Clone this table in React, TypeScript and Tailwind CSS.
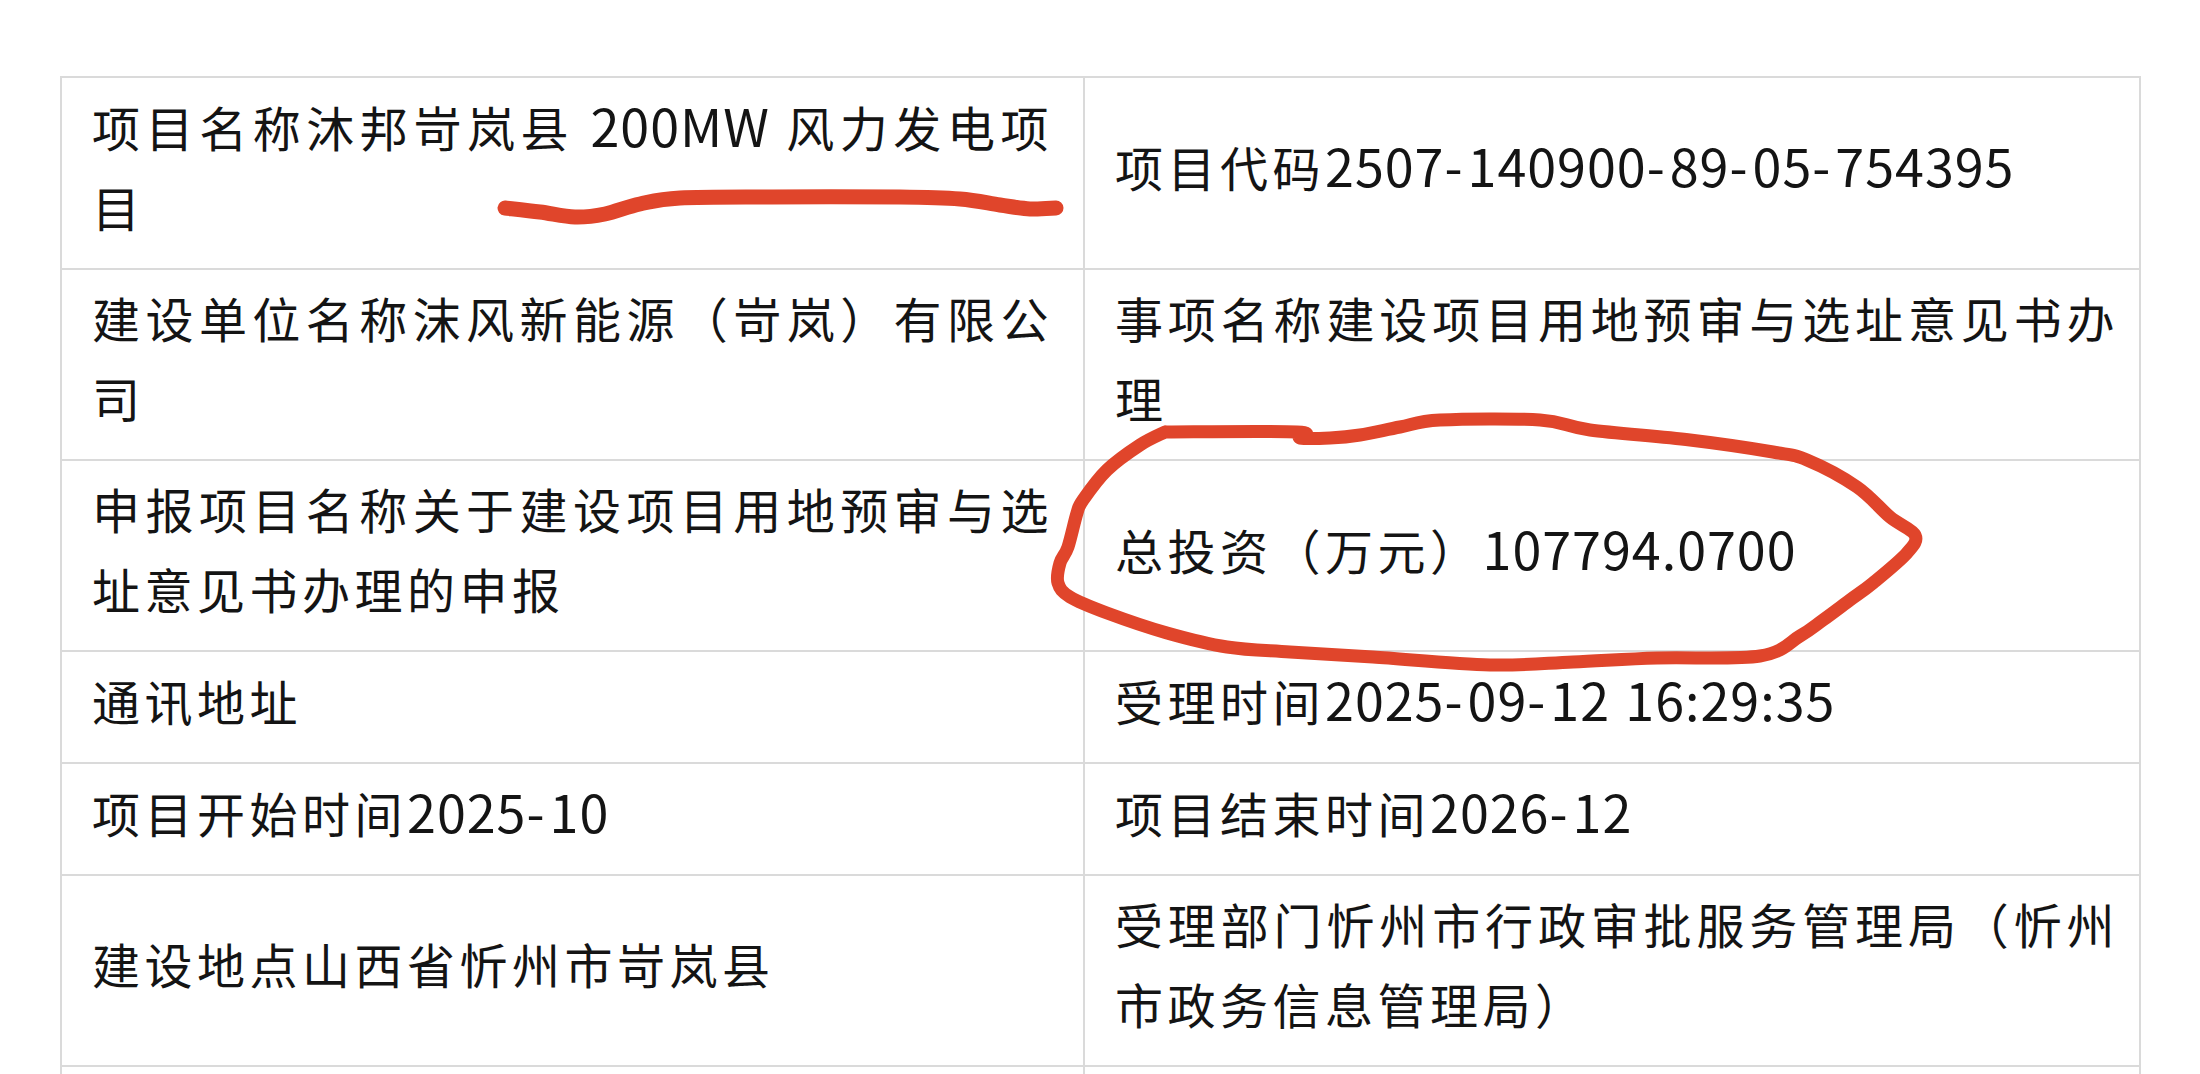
type Cell = { text: string; breakAt?: number };
type Row = [Cell, Cell];

const rows: Row[] = [
  [
    { text: "项目名称沐邦岢岚县 200MW 风力发电项目", breakAt: 22 },
    { text: "项目代码2507-140900-89-05-754395" },
  ],
  [
    { text: "建设单位名称沫风新能源（岢岚）有限公司" },
    { text: "事项名称建设项目用地预审与选址意见书办理" },
  ],
  [
    { text: "申报项目名称关于建设项目用地预审与选址意见书办理的申报" },
    { text: "总投资（万元）107794.0700" },
  ],
  [{ text: "通讯地址" }, { text: "受理时间2025-09-12 16:29:35" }],
  [{ text: "项目开始时间2025-10" }, { text: "项目结束时间2026-12" }],
  [
    { text: "建设地点山西省忻州市岢岚县" },
    { text: "受理部门忻州市行政审批服务管理局（忻州市政务信息管理局）" },
  ],
];

// hand-drawn red marks on top of the screenshot
const underline = [
  [505, 208], [540, 212], [575, 217], [605, 214], [640, 204], [680, 198],
  [772, 197], [900, 197], [960, 199], [1000, 205], [1030, 209], [1056, 208],
];

const loop = [
  [1165, 432], [1297, 432], [1300, 438], [1330, 438], [1360, 435], [1400, 427],
  [1440, 420], [1540, 420], [1590, 430], [1690, 440], [1773, 452], [1807, 460],
  [1857, 487], [1890, 517], [1915, 535], [1907, 553], [1873, 583], [1850, 600],
  [1823, 620], [1800, 636], [1760, 656], [1657, 658], [1573, 662],
  [1490, 665], [1373, 657], [1290, 652], [1227, 647], [1167, 633], [1107, 613],
  [1070, 597], [1058, 583], [1060, 563], [1068, 547], [1077, 513], [1083, 500],
  [1107, 470], [1140, 445], [1165, 432],
];

// catmull-rom through the points, as cubic curves
function smooth(p: number[][]) {
  let d = `M${p[0][0]},${p[0][1]}`;
  for (let i = 0; i < p.length - 1; i++) {
    const a = p[i - 1] ?? p[i];
    const b = p[i];
    const c = p[i + 1];
    const e = p[i + 2] ?? c;
    const c1 = [b[0] + (c[0] - a[0]) / 6, b[1] + (c[1] - a[1]) / 6];
    const c2 = [c[0] - (e[0] - b[0]) / 6, c[1] - (e[1] - b[1]) / 6];
    d += ` C${c1[0]},${c1[1]} ${c2[0]},${c2[1]} ${c[0]},${c[1]}`;
  }
  return d;
}

// digits and latin get a slightly larger, tighter face, like the phone font
function Rich({ text }: { text: string }) {
  return (
    <>
      {text.split(/([0-9A-Za-z.:\-]+)/).map((part, i) =>
        i % 2 === 1 ? (
          <span key={i} className="text-[52px] tracking-[1px]">
            {part.split(/(-)/).map((bit, j) =>
              bit === "-" ? (
                <span key={j} className="tracking-[5px]">
                  -
                </span>
              ) : (
                bit
              )
            )}
          </span>
        ) : (
          part
        )
      )}
    </>
  );
}

function TableCell({ cell, side }: { cell: Cell; side: "left" | "right" }) {
  const lines = cell.breakAt
    ? [cell.text.slice(0, cell.breakAt), cell.text.slice(cell.breakAt)]
    : [cell.text];
  return (
    <div
      className={
        "flex items-center border-r-2 border-[#dadada] pt-[7px] pb-[22px] pl-[30px] " +
        (side === "left" ? "pr-[30px]" : "pr-[20px]")
      }
    >
      <p className={"w-full text-justify " + (cell.breakAt ? "[text-align-last:justify]" : "")}>
        <Rich text={lines[0]} />
        {lines[1] && (
          <>
            <br />
            <Rich text={lines[1]} />
          </>
        )}
      </p>
    </div>
  );
}

export default function App() {
  return (
    <div className="relative h-screen w-full overflow-hidden bg-white font-['Noto_Sans_CJK_SC',sans-serif] text-[48px] leading-[80px] tracking-[4.5px] text-[#141414]">
      <div className="ml-[60px] mt-[76px] w-[2081px] border-l-2 border-t-2 border-[#dadada]">
        {rows.map(([left, right], i) => (
          <div key={i} className="grid grid-cols-[1023px_1056px] border-b-2 border-[#dadada]">
            <TableCell cell={left} side="left" />
            <TableCell cell={right} side="right" />
          </div>
        ))}
        <div className="grid h-[111px] grid-cols-[1023px_1056px] border-b-2 border-[#dadada]">
          <div className="border-r-2 border-[#dadada]" />
          <div className="border-r-2 border-[#dadada]" />
        </div>
      </div>

      <svg
        className="pointer-events-none absolute left-0 top-0"
        width={2200}
        height={1074}
        viewBox="0 0 2200 1074"
      >
        <path
          d={smooth(underline)}
          fill="none"
          stroke="#e0452b"
          strokeWidth={15}
          strokeLinecap="round"
          strokeLinejoin="round"
        />
        <path
          d={smooth(loop)}
          fill="none"
          stroke="#e0452b"
          strokeWidth={13}
          strokeLinecap="round"
          strokeLinejoin="round"
        />
      </svg>
    </div>
  );
}
